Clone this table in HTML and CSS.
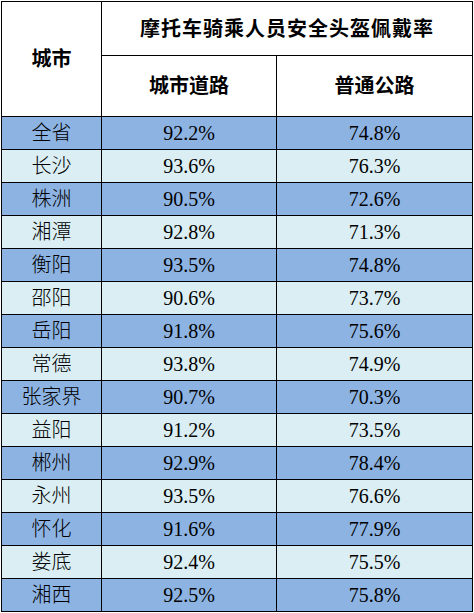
FILE: index.html
```html
<!DOCTYPE html>
<html lang="zh">
<head>
<meta charset="utf-8">
<title>摩托车骑乘人员安全头盔佩戴率</title>
<link rel="stylesheet" href="styles.css">
</head>
<body>
<table class="rate-table">
  <colgroup>
    <col class="col-city">
    <col class="col-urban">
    <col class="col-road">
  </colgroup>
  <thead>
    <tr class="head-top">
      <th rowspan="2" class="city-head">城市</th>
      <th colspan="2" class="title">摩托车骑乘人员安全头盔佩戴率</th>
    </tr>
    <tr class="head-sub">
      <th>城市道路</th>
      <th>普通公路</th>
    </tr>
  </thead>
  <tbody>
    <tr class="dark"><td>全省</td><td>92.2%</td><td>74.8%</td></tr>
    <tr class="light"><td>长沙</td><td>93.6%</td><td>76.3%</td></tr>
    <tr class="dark"><td>株洲</td><td>90.5%</td><td>72.6%</td></tr>
    <tr class="light"><td>湘潭</td><td>92.8%</td><td>71.3%</td></tr>
    <tr class="dark"><td>衡阳</td><td>93.5%</td><td>74.8%</td></tr>
    <tr class="light"><td>邵阳</td><td>90.6%</td><td>73.7%</td></tr>
    <tr class="dark"><td>岳阳</td><td>91.8%</td><td>75.6%</td></tr>
    <tr class="light"><td>常德</td><td>93.8%</td><td>74.9%</td></tr>
    <tr class="dark"><td>张家界</td><td>90.7%</td><td>70.3%</td></tr>
    <tr class="light"><td>益阳</td><td>91.2%</td><td>73.5%</td></tr>
    <tr class="dark"><td>郴州</td><td>92.9%</td><td>78.4%</td></tr>
    <tr class="light"><td>永州</td><td>93.5%</td><td>76.6%</td></tr>
    <tr class="dark"><td>怀化</td><td>91.6%</td><td>77.9%</td></tr>
    <tr class="light"><td>娄底</td><td>92.4%</td><td>75.5%</td></tr>
    <tr class="dark"><td>湘西</td><td>92.5%</td><td>75.8%</td></tr>
  </tbody>
</table>
</body>
</html>
```
FILE: styles.css
```css
html, body {
  margin: 0;
  padding: 0;
  background: #ffffff;
}

body {
  padding: 1px 0 0 1px;
  font-family: "Liberation Serif", "Noto Sans CJK SC", serif;
  color: #000000;
}

.rate-table {
  border-collapse: separate;
  border-spacing: 0;
  table-layout: fixed;
  width: 472px;
  border-top: 1px solid #000;
  border-left: 1px solid #000;
}

.col-city { width: 100px; }
.col-urban { width: 175px; }
.col-road { width: 196px; }

.rate-table th,
.rate-table td {
  border-right: 1px solid #000;
  border-bottom: 1px solid #000;
  padding: 0;
  text-align: center;
  vertical-align: middle;
  font-size: 20px;
  line-height: 1;
  white-space: nowrap;
}

.rate-table th {
  font-weight: bold;
  background: #ffffff;
}

.rate-table td {
  font-weight: 300;
}

.head-top { height: 54px; }
.head-sub { height: 61px; }

.title {
  letter-spacing: 1px;
}

.rate-table tbody tr { height: 33px; }

.dark td { background: #8db3e2; }
.light td { background: #daeef3; }
```
